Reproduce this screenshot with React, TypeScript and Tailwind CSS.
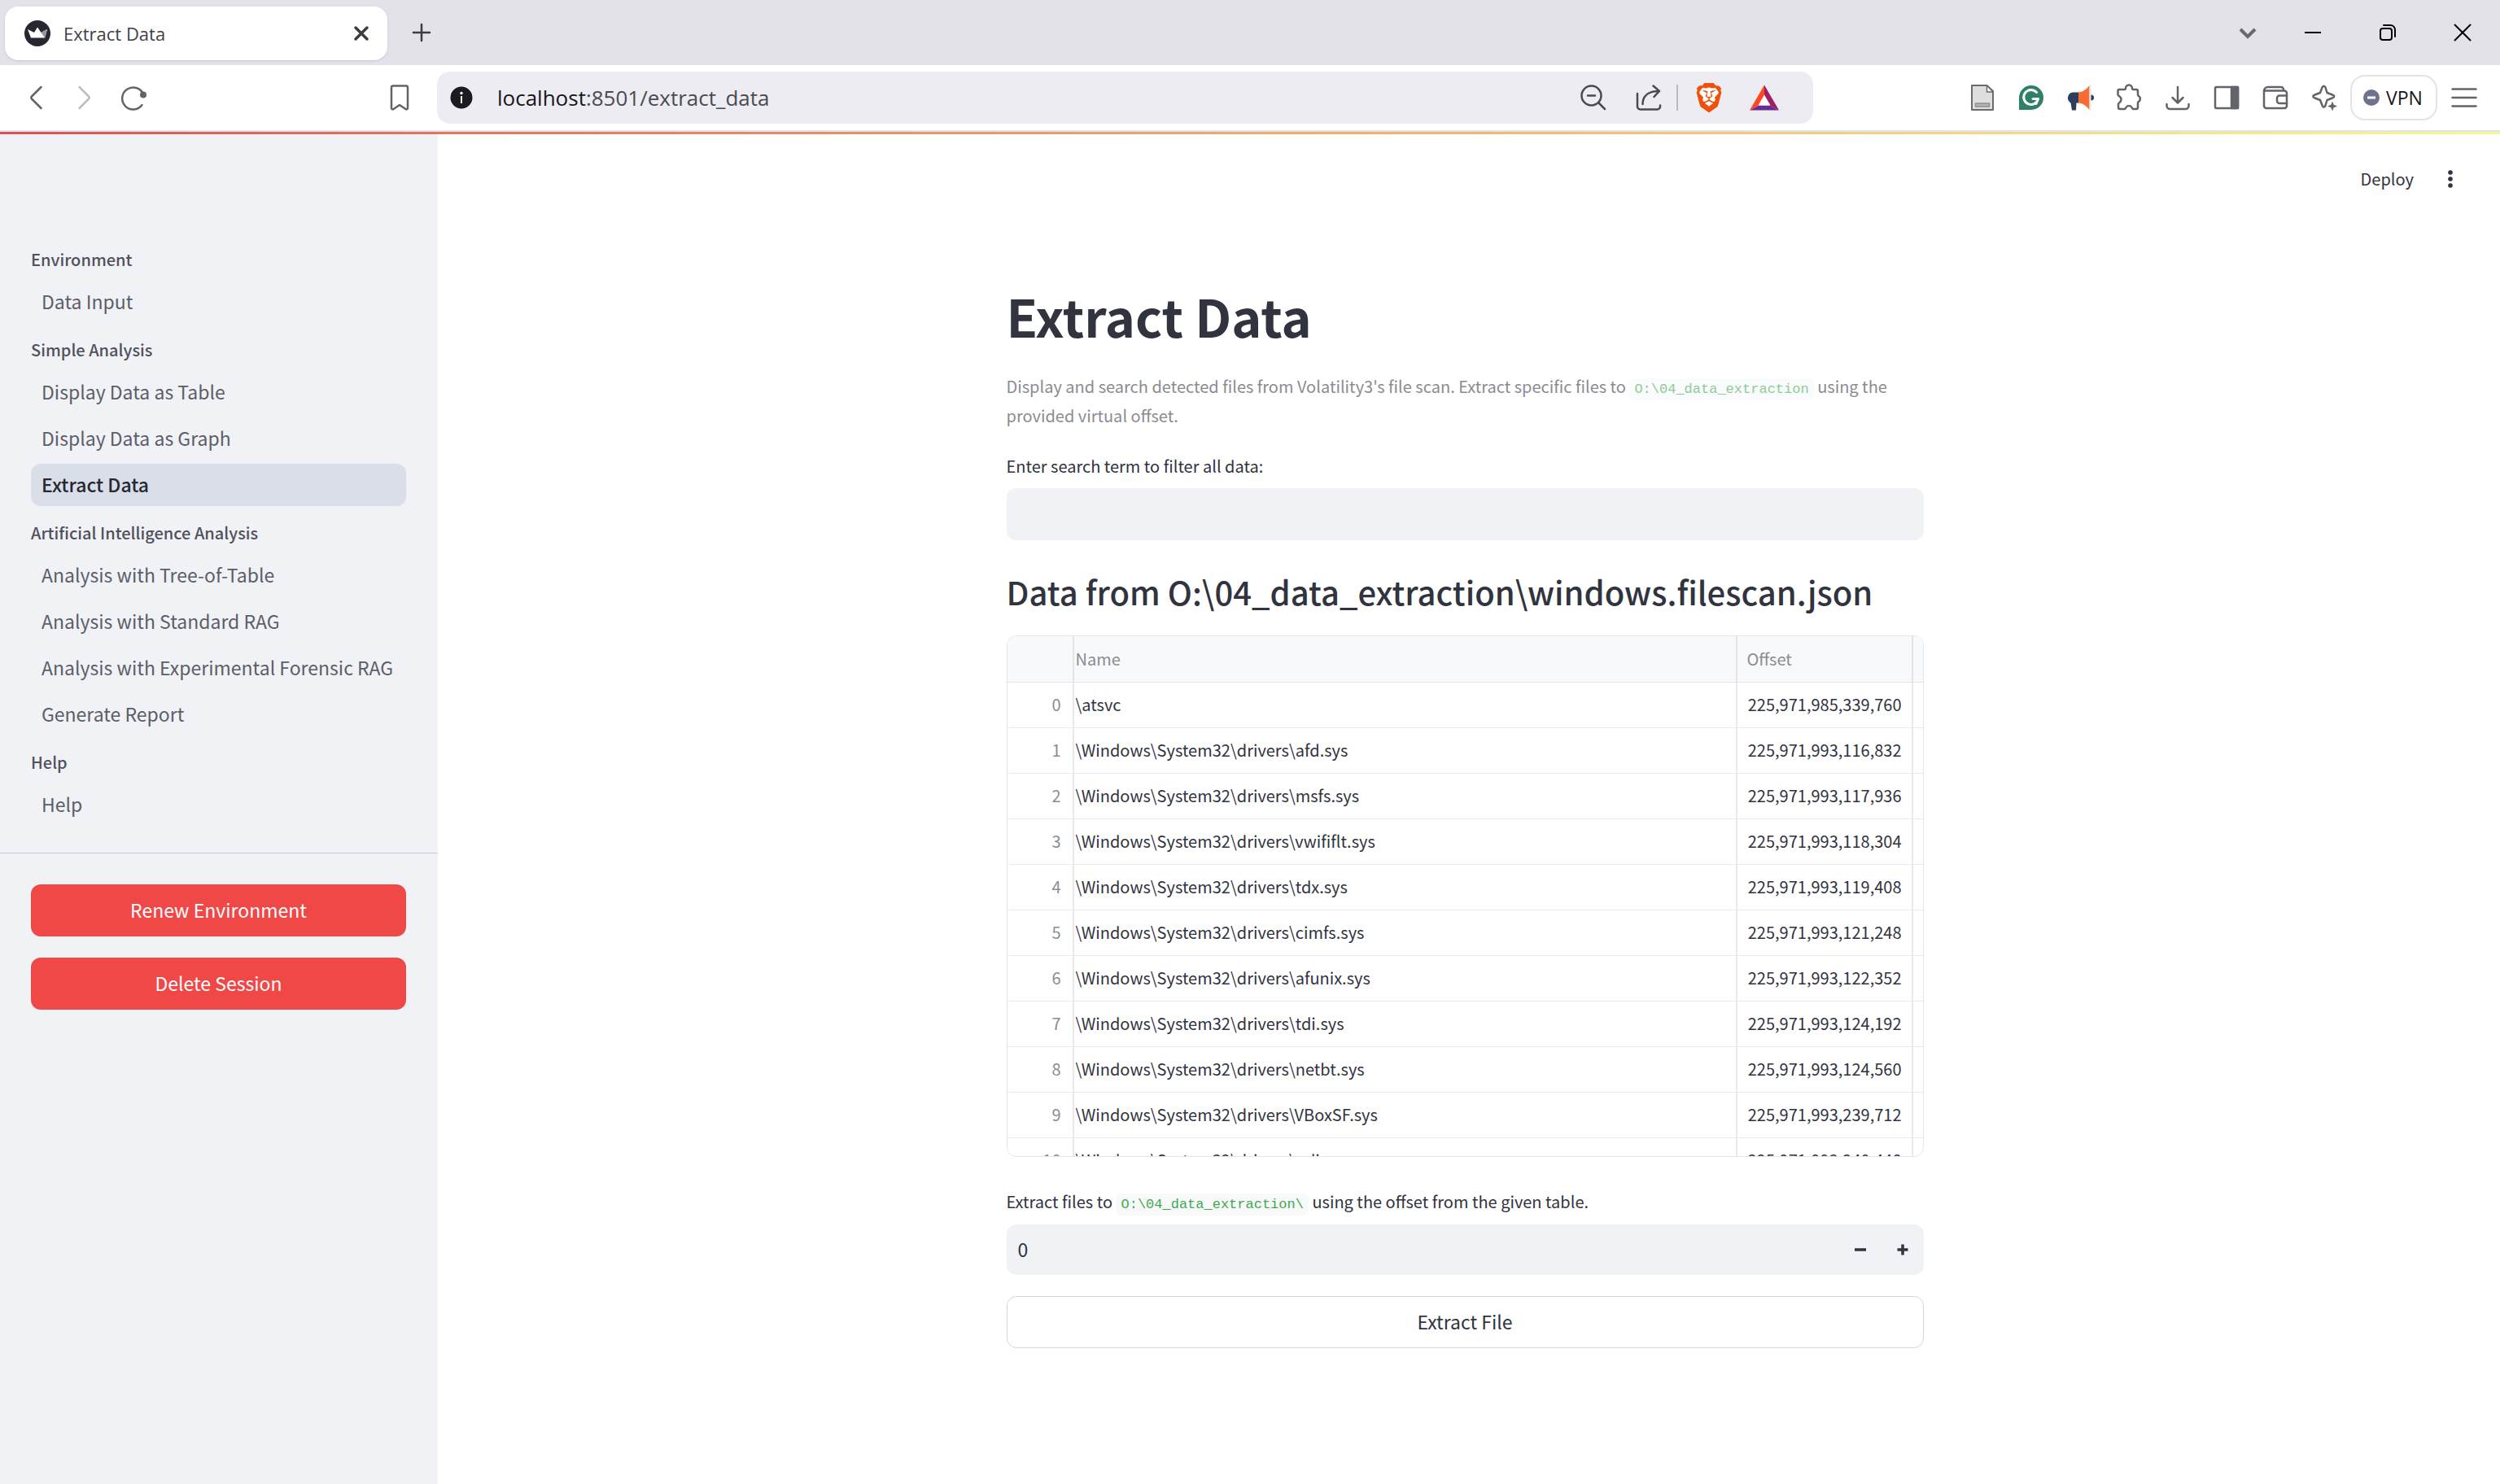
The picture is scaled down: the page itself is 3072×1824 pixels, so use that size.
import type { ReactNode } from "react";
import { SiBrave } from "react-icons/si";

const navSections = [
  { title: "Environment", items: ["Data Input"] },
  {
    title: "Simple Analysis",
    items: ["Display Data as Table", "Display Data as Graph", "Extract Data"],
  },
  {
    title: "Artificial Intelligence Analysis",
    items: [
      "Analysis with Tree-of-Table",
      "Analysis with Standard RAG",
      "Analysis with Experimental Forensic RAG",
      "Generate Report",
    ],
  },
  { title: "Help", items: ["Help"] },
];

const rows: [string, string][] = [
  ["\\atsvc", "225,971,985,339,760"],
  ["\\Windows\\System32\\drivers\\afd.sys", "225,971,993,116,832"],
  ["\\Windows\\System32\\drivers\\msfs.sys", "225,971,993,117,936"],
  ["\\Windows\\System32\\drivers\\vwififlt.sys", "225,971,993,118,304"],
  ["\\Windows\\System32\\drivers\\tdx.sys", "225,971,993,119,408"],
  ["\\Windows\\System32\\drivers\\cimfs.sys", "225,971,993,121,248"],
  ["\\Windows\\System32\\drivers\\afunix.sys", "225,971,993,122,352"],
  ["\\Windows\\System32\\drivers\\tdi.sys", "225,971,993,124,192"],
  ["\\Windows\\System32\\drivers\\netbt.sys", "225,971,993,124,560"],
  ["\\Windows\\System32\\drivers\\VBoxSF.sys", "225,971,993,239,712"],
  ["\\Windows\\System32\\drivers\\ndis.sys", "225,971,993,240,448"],
];

function Icon({ children, className = "" }: { children: ReactNode; className?: string }) {
  return (
    <svg
      viewBox="0 0 36 36"
      className={`size-9 shrink-0 ${className}`}
      fill="none"
      stroke="currentColor"
      strokeWidth={2.5}
      strokeLinecap="round"
      strokeLinejoin="round"
      aria-hidden="true"
    >
      {children}
    </svg>
  );
}

function IconButton({ label, children, className = "" }: { label: string; children: ReactNode; className?: string }) {
  return (
    <button type="button" aria-label={label} className={`flex w-[60px] shrink-0 items-center justify-center ${className}`}>
      <Icon>{children}</Icon>
    </button>
  );
}

function TabStrip() {
  return (
    <div className="flex h-20 items-center bg-[#e3e2e8]">
      <div className="mt-0.5 ml-1.5 flex h-[66px] w-[470px] items-center rounded-2xl bg-white pr-3.5 pl-6 shadow-sm">
        <svg viewBox="0 0 32 32" className="size-8 shrink-0" aria-hidden="true">
          <circle cx="16" cy="16" r="16" fill="#262730" />
          <path d="M4 11l8 4 4-6.500 4.500 6.500 7.500-4-3 10.500H8z" fill="#fff" />
          <path d="M16 8.500l4.500 6.500 7.500-4-3 10.500z" fill="#c9c9ce" />
          <path d="M20.500 15l7.500-4-3 10.500z" fill="#96969e" />
        </svg>
        <span className="ml-4 flex-1 text-[22px] leading-8 text-[#3f4145]">Extract Data</span>
        <button type="button" aria-label="Close tab" className="text-[#3b3d42]">
          <Icon>
            <path d="M11 11l14 14M25 11L11 25" strokeWidth={3.5} />
          </Icon>
        </button>
      </div>
      <IconButton label="New tab" className="ml-3 text-[#3b3d42]">
        <path d="M18 8v20M8 18h20" />
      </IconButton>
      <div className="ml-auto flex items-center text-black">
        <button type="button" aria-label="Search tabs" className="flex w-[68px] justify-center text-[#66686f]">
          <Icon>
            <path d="M9 14l9 9 9-9" strokeWidth={4} strokeLinecap="butt" strokeLinejoin="miter" />
          </Icon>
        </button>
        <button type="button" aria-label="Minimize" className="flex w-[92px] justify-center">
          <Icon>
            <path d="M8 18h20" strokeWidth={2} strokeLinecap="butt" />
          </Icon>
        </button>
        <button type="button" aria-label="Restore" className="flex w-[92px] justify-center">
          <Icon>
            <rect x="9" y="13" width="14" height="14" rx="3" strokeWidth={2} />
            <path d="M13 9h8.500a5.500 5.500 0 0 1 5.500 5.500V23" strokeWidth={2} />
          </Icon>
        </button>
        <button type="button" aria-label="Close window" className="flex w-[92px] justify-center">
          <Icon>
            <path d="M8.500 8.500l19 19M27.500 8.500l-19 19" strokeWidth={2} />
          </Icon>
        </button>
      </div>
    </div>
  );
}

function AddressBar() {
  return (
    <div className="ml-4 flex h-16 w-[1691px] shrink items-center rounded-2xl bg-[#edecf2] pr-[30px] pl-4">
      <svg viewBox="0 0 28 28" className="size-7 shrink-0" aria-hidden="true">
        <circle cx="14" cy="14" r="13.500" fill="#1b1b20" />
        <circle cx="14" cy="8.500" r="1.700" fill="#fff" />
        <rect x="13" y="12" width="2" height="9" fill="#fff" />
      </svg>
      <div className="ml-[30px] flex-1 text-[26px] leading-9 text-[#494b50]">
        <span className="text-[#17171b]">localhost</span>:8501/extract_data
      </div>
      <div className="flex items-center text-[#494b50]">
        <IconButton label="Zoom out">
          <circle cx="15.500" cy="15.500" r="12" />
          <path d="M11 15.500h9M24.500 24.500L32 32" />
        </IconButton>
        <button type="button" aria-label="Share" className="ml-2 flex w-[60px] justify-center">
          <Icon>
            <path d="M4 13v16a3.500 3.500 0 0 0 3.500 3.500h21A3.500 3.500 0 0 0 32 29v-1.500" />
            <path d="M10.500 26c0-10 7-16 20-16M23.500 3.500l7.500 6.500-6.500 7" />
          </Icon>
        </button>
        <div className="ml-1 h-8 w-0.5 bg-[#b9b9c0]" />
        <button type="button" aria-label="Shields" className="ml-2 flex w-[60px] justify-center">
          <span className="relative block size-9">
            <svg viewBox="0 0 36 36" className="absolute inset-0 size-9" aria-hidden="true">
              <path d="M7 9l11-3 11 3 1 6-5 14-7 4-7-4-5-14z" fill="#fff" />
            </svg>
            <SiBrave className="absolute inset-0 size-9 text-[#f1500b]" />
          </span>
        </button>
        <button type="button" aria-label="Rewards" className="ml-2 flex w-[60px] justify-center">
          <svg viewBox="0 0 36 36" className="size-9" aria-hidden="true">
            <path d="M18 2.500L0 33.500l11.500-6L18 16z" fill="#ff4724" />
            <path d="M18 2.500l18 31-11.500-6L18 16z" fill="#9e1f63" />
            <path d="M0 33.500h36l-11.500-6h-13z" fill="#662d91" />
            <path d="M18 14.500L10.500 27.500h15z" fill="#fff" />
          </svg>
        </button>
      </div>
    </div>
  );
}

function Toolbar() {
  return (
    <div className="flex h-20 items-center bg-white text-[#62646a]">
      <IconButton label="Back" className="ml-3.5">
        <path d="M24.500 5L13 16.500a2 2 0 0 0 0 3L24.500 31" />
      </IconButton>
      <IconButton label="Forward" className="text-[#bdbec2]">
        <path d="M11.500 5L23 16.500a2 2 0 0 1 0 3L11.500 31" />
      </IconButton>
      <IconButton label="Reload">
        <path d="M28.500 27A13.500 13.500 0 1 1 30 13.500" />
        <circle cx="30" cy="14.500" r="4" fill="currentColor" stroke="none" />
      </IconButton>
      <div className="grow-3" />
      <IconButton label="Bookmark">
        <path d="M8 5.500a2 2 0 0 1 2-2h16a2 2 0 0 1 2 2V31a1.500 1.500 0 0 1-2.300 1.200L18 27l-7.700 5.200A1.500 1.500 0 0 1 8 31z" />
      </IconButton>
      <AddressBar />
      <div className="grow-2" />
      <div className="flex items-center">
        <IconButton label="Page saver">
          <path d="M5 3h18.500l7.500 7v23H5z" fill="#dedede" stroke="#6b6b6b" strokeWidth={2} />
          <path d="M23.500 3v8H31z" fill="#fff" stroke="#6b6b6b" strokeWidth={1.500} />
          <rect x="9.500" y="25" width="17" height="4" fill="#b4b4b4" stroke="#8f8f8f" strokeWidth={1.500} />
        </IconButton>
        <IconButton label="Grammar check">
          <path d="M3 33V18a15 15 0 1 1 15 15z" fill="#2f8068" stroke="none" />
          <path d="M24.500 11.500A9 9 0 1 0 26.500 19.500H20M26.500 19.500l-2.500 6" stroke="#fff" strokeWidth={3} />
        </IconButton>
        <IconButton label="Announcements">
          <path d="M9 11.500h7v13h-2.500l-.5 9H8l-1.500-9A7 7 0 0 1 9 11.500z" fill="#2d3e5c" stroke="none" />
          <path d="M16 11.500C21 11 26 8 29.500 3v30c-3.500-5-8.500-8-13.500-8.500z" fill="#f96b32" stroke="none" />
          <path d="M29.500 2.500h2v31h-2z" fill="#dfe7ef" stroke="none" />
          <path d="M31.500 14.500a3.500 3.500 0 0 1 0 7z" fill="#2d3e5c" stroke="none" />
        </IconButton>
        <IconButton label="Extensions">
          <path d="M6 8h6.500c1 0 1.500-.7 1.500-1.500a4 4 0 0 1 8 0c0 .8.500 1.500 1.500 1.500H27a2 2 0 0 1 2 2v4.500c0 .8.600 1.500 1.300 1.800a4 4 0 0 1 0 6.400c-.7.300-1.300 1-1.300 1.800V30a2 2 0 0 1-2 2h-3.500c-1 0-1.500-1-2-2a4 4 0 0 0-7 0c-.5 1-1 2-2 2H7a2 2 0 0 1-2-2v-4c0-1 1-1.500 1.500-2a4.500 4.500 0 0 0 0-7.500C6 16 4.500 15.500 4.500 14.500V9.500A1.500 1.500 0 0 1 6 8z" />
        </IconButton>
        <IconButton label="Downloads">
          <path d="M18 5v19M11.500 18l6.500 6.500 6.500-6.500M4.500 26v2a4 4 0 0 0 4 4h19a4 4 0 0 0 4-4v-2" />
        </IconButton>
        <IconButton label="Side panel">
          <rect x="4" y="5" width="28" height="26" rx="1.500" />
          <path d="M24 5h8v26h-8z" fill="currentColor" />
        </IconButton>
        <IconButton label="Wallet">
          <path d="M4 10a5 5 0 0 1 5-5h16a3 3 0 0 1 3 3v1.500M4.500 9.500H29a3 3 0 0 1 3 3V28a3 3 0 0 1-3 3H7a3 3 0 0 1-3-3V10" />
          <path d="M32 15.500h-9a3 3 0 0 0-3 3V22a3 3 0 0 0 3 3h9" />
        </IconButton>
        <IconButton label="Assistant">
          <path d="M15.500 5.500c1-2.500 3-2.500 4 0l2 6.500 6.500 2.500c3 1 3 3 0 4l-6.500 2.500-2 6.500c-1 3-3 3-4 0L13 21l-6.500-2.500c-3-1-3-3 0-4L13 12z" />
          <path d="M28 22.500l1.700 4.300 4.300 1.700-4.300 1.700L28 34.500l-1.700-4.300L22 28.500l4.300-1.700z" fill="currentColor" stroke="none" />
        </IconButton>
        <button
          type="button"
          className="ml-0.5 flex h-14 w-[107px] items-center rounded-[18px] border-2 border-[#e3e3ea] pl-3.5 text-[#17171b]"
        >
          <svg viewBox="0 0 20 20" className="size-5 shrink-0" aria-hidden="true">
            <circle cx="10" cy="10" r="10" fill="#70718e" />
            <rect x="5" y="8.500" width="10" height="3" fill="#fff" />
          </svg>
          <span className="ml-2 text-[23px] leading-8">VPN</span>
        </button>
        <button type="button" aria-label="Menu" className="mr-[26px] ml-[15px]">
          <Icon>
            <path d="M3.500 7.500h29M3.500 18h29M3.500 28.500h29" />
          </Icon>
        </button>
      </div>
    </div>
  );
}

function Sidebar() {
  return (
    <aside className="w-[538px] shrink-0 bg-[#f0f2f6] pt-32">
      <nav className="pr-[39px] pb-[26px] pl-[38px]">
        {navSections.map((section) => (
          <section key={section.title} className="pb-0.5">
            <h2 className="flex h-[52px] items-center text-[20px] leading-8 font-medium text-[#4f515c]">
              {section.title}
            </h2>
            {section.items.map((item) => {
              const active = item === "Extract Data";
              return (
                <a
                  key={item}
                  href="#"
                  aria-current={active ? "page" : undefined}
                  className={
                    active
                      ? "mb-[5px] flex h-[52px] items-center rounded-xl bg-[#dadee9] px-[13px] pb-0.5 text-[23px] leading-9 font-medium text-[#262730]"
                      : "mb-[5px] flex h-[52px] items-center rounded-xl px-[13px] pb-0.5 text-[23px] leading-9 whitespace-nowrap text-[#5c5e69]"
                  }
                >
                  {item}
                </a>
              );
            })}
          </section>
        ))}
      </nav>
      <hr className="border-t border-[#c9cbd2]" />
      <div className="flex flex-col gap-[26px] pt-[38px] pr-[39px] pl-[38px]">
        {["Renew Environment", "Delete Session"].map((label) => (
          <button key={label} type="button" className="h-16 rounded-xl bg-[#f04747] pb-0.5 text-[23px] leading-9 text-white">
            {label}
          </button>
        ))}
      </div>
    </aside>
  );
}

function DataTable() {
  return (
    <div className="h-[641px] overflow-hidden rounded-xl border border-[#e6e7ea]">
      <table className="w-full table-fixed border-separate border-spacing-0 text-[20px] leading-8">
        <colgroup>
          <col className="w-[82px]" />
          <col />
          <col className="w-[216px]" />
          <col className="w-3" />
        </colgroup>
        <thead>
          <tr className="h-[57px] bg-[#f8f9fb] text-left text-[#8b8c94]">
            <th className="border-r-2 border-b border-[#e3e4e8]" aria-label="Index" />
            <th className="border-r-2 border-b border-[#e3e4e8] pl-0.5 font-normal">Name</th>
            <th className="border-r-2 border-b border-[#e3e4e8] pl-3 font-normal">Offset</th>
            <th className="border-b border-[#e3e4e8]" aria-label="Spacer" />
          </tr>
        </thead>
        <tbody>
          {rows.map(([name, offset], i) => (
            <tr key={offset} className="h-14 text-[#31333f]">
              <td className="border-r-2 border-b border-[#e8e9ec] pr-3.5 pb-0.5 text-right text-[#8b8c94]">{i}</td>
              <td className="border-r-2 border-b border-[#e8e9ec] pb-0.5 pl-0.5">{name}</td>
              <td className="border-r-2 border-b border-[#e8e9ec] pr-3 pb-0.5 text-right">{offset}</td>
              <td className="border-b border-[#e8e9ec]" />
            </tr>
          ))}
        </tbody>
      </table>
    </div>
  );
}

function Main() {
  return (
    <main className="flex-1 bg-white text-[#31333f]">
      <header className="flex h-[110px] items-center justify-end pr-[43px]">
        <button type="button" className="text-[20px] leading-8">
          Deploy
        </button>
        <button type="button" aria-label="More options" className="ml-[27px]">
          <Icon>
            <g fill="currentColor" stroke="none">
              <circle cx="18" cy="10" r="2.800" />
              <circle cx="18" cy="18" r="2.800" />
              <circle cx="18" cy="26" r="2.800" />
            </g>
          </Icon>
        </button>
      </header>
      <div className="pr-2.5">
        <div className="mx-auto max-w-[1127px] pt-[71px]">
          <h1 className="text-[63px] leading-[84px] font-bold">Extract Data</h1>
          <p className="mt-[27px] text-[20px] leading-9 text-[#8b8c92]">
            Display and search detected files from Volatility3's file scan. Extract specific files to{" "}
            <code className="rounded-md bg-[#fafbfc] px-1.5 py-1 font-['Liberation_Mono',monospace] text-[17px] leading-none text-[#8fcb95]">
              O:\04_data_extraction
            </code>{" "}
            using the provided virtual offset.
          </p>
          <label htmlFor="search" className="mt-7 block text-[20px] leading-8">
            Enter search term to filter all data:
          </label>
          <input
            id="search"
            type="text"
            className="mt-[11px] block h-16 w-full rounded-xl bg-[#f0f2f6] px-3.5 text-[23px] outline-none"
          />
          <h2 className="mt-9 mb-[27px] text-[40px] leading-[54px] font-medium">
            Data from O:\04_data_extraction\windows.filescan.json
          </h2>
          <DataTable />
          <label htmlFor="offset" className="mt-[39px] block text-[20px] leading-8">
            Extract files to{" "}
            <code className="rounded-md bg-[#f8f9fb] px-1.5 py-1 font-['Liberation_Mono',monospace] text-[17px] leading-none text-[#3fab4b]">
              O:\04_data_extraction\
            </code>{" "}
            using the offset from the given table.
          </label>
          <div className="mt-3 flex h-[62px] items-center rounded-xl bg-[#f0f2f6]">
            <input
              id="offset"
              type="text"
              inputMode="numeric"
              defaultValue="0"
              className="h-full min-w-0 flex-1 bg-transparent pb-0.5 pl-3.5 text-[23px] outline-none"
            />
            <button type="button" aria-label="Decrease" className="flex h-full w-[52px] items-center justify-center">
              <Icon>
                <path d="M11 18h14" strokeWidth={3.5} strokeLinecap="butt" />
              </Icon>
            </button>
            <button type="button" aria-label="Increase" className="flex h-full w-[52px] items-center justify-center">
              <Icon>
                <path d="M11.500 18h13M18 11.500v13" strokeWidth={3.5} strokeLinecap="butt" />
              </Icon>
            </button>
          </div>
          <button
            type="button"
            className="mt-[26px] h-16 w-full rounded-xl border border-[#d5d6d9] bg-white pb-0.5 text-[23px] leading-9"
          >
            Extract File
          </button>
        </div>
      </div>
    </main>
  );
}

export default function App() {
  return (
    <div className="flex min-h-screen flex-col bg-white">
      <div className="font-['Open_Sans',sans-serif]">
        <TabStrip />
        <Toolbar />
      </div>
      <div className="h-0.5 bg-[#e3e2e8]" />
      <div className="h-[3px] bg-linear-to-r from-[#d9515a] via-[#ecab6c] to-[#f8f890]" />
      <div className="flex flex-1 font-['Noto_Sans_CJK_SC',sans-serif]">
        <Sidebar />
        <Main />
      </div>
    </div>
  );
}
